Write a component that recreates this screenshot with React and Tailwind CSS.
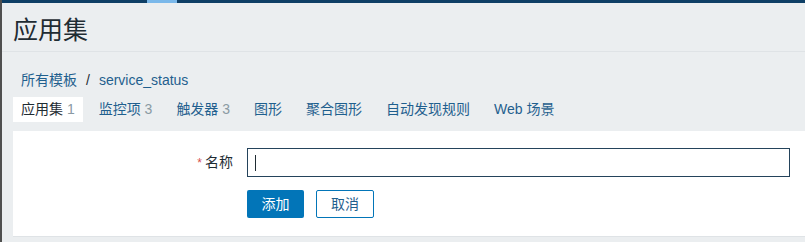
const tabs = [
  { label: "应用集", count: "1", active: true },
  { label: "监控项", count: "3" },
  { label: "触发器", count: "3" },
  { label: "图形" },
  { label: "聚合图形" },
  { label: "自动发现规则" },
  { label: "Web 场景" },
]

const App = () => {
  return (
    <div className="w-[805px] h-[242px] overflow-hidden bg-[#ebeef0] font-['Liberation_Sans','Noto_Sans_CJK_SC',sans-serif] border-l-2 border-[#4f4f4f]">
      {/* top bar */}
      <div className="flex h-[3px] bg-[#0e3f66]">
        <div className="ml-[145px] w-[30px] bg-[#7ab8ea]" />
      </div>

      <header className="h-[49px] border-b border-[#dfe3e6] pl-[11px] pt-[12px]">
        <h1 className="text-[25px] leading-[30px] text-[#1f2c33]">应用集</h1>
      </header>

      <nav className="pl-[19px] pt-[19px] text-[14px] leading-[18px] text-[#1f5f8e]">
        <span>所有模板</span>
        <span className="mx-[9px] text-[#1f2c33]">/</span>
        <span>service_status</span>
      </nav>

      <div className="ml-[11px] mt-[8px] flex text-[14px] leading-[25px]">
        {tabs.map((tab, idx) => (
          <div
            key={idx}
            className={`px-[8px] mr-[8px] whitespace-pre ${tab.active ? "bg-white text-[#1f2c33]" : "text-[#1f5f8e]"}`}
          >
            {tab.label}
            {tab.count && <span className="text-[#8a9aa3]"> {tab.count}</span>}
          </div>
        ))}
      </div>

      <div className="ml-[11px] mt-[9px] h-[106px] bg-white border-b border-[#dfe3e6] pt-[17px]">
        <div className="flex items-center">
          <label className="w-[234px] pr-[14px] text-right text-[14px] text-[#1f2c33]">
            <span className="text-[#d64e4e] mr-[3px] text-[12px]">*</span>名称
          </label>
          <div className="w-[543px] h-[29px] border border-[#24435b] bg-white flex items-center pl-[7px]">
            <div className="w-px h-[16px] bg-[#1f2c33]" />
          </div>
        </div>
        <div className="flex gap-[12px] ml-[234px] mt-[13px] text-[14px]">
          <button className="w-[57px] h-[28px] rounded-[2px] bg-[#0275b8] text-white">添加</button>
          <button className="w-[58px] h-[28px] rounded-[2px] border border-[#0275b8] bg-white text-[#1f5f8e]">取消</button>
        </div>
      </div>
    </div>
  )
}

export default App
